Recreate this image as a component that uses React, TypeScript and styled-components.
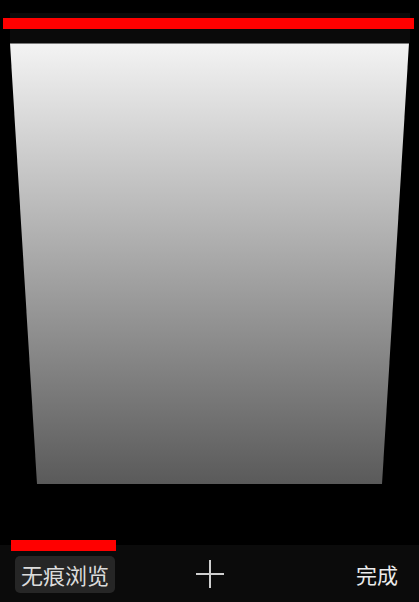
import React from "react";
import styled, { createGlobalStyle } from "styled-components";

const Global = createGlobalStyle`
  html, body {
    margin: 0;
    padding: 0;
    background: #000;
  }
  body {
    font-family: "Noto Sans CJK SC", "Noto Sans", sans-serif;
    -webkit-font-smoothing: antialiased;
  }
`;

const Screen = styled.div`
  width: 419px;
  height: 602px;
  background: #000;
  display: flex;
  flex-direction: column;
  overflow: hidden;
`;

const Stage = styled.div`
  flex: 1;
  display: flex;
  flex-direction: column;
  padding: 13px 9px 0 10px;
`;

const CardHeader = styled.div`
  height: 30px;
  background: #0a0a0a;
  padding-top: 5px;
  box-sizing: border-box;
`;

const RedBar = styled.div`
  height: 11px;
  background: #ff0000;
  margin: 0 -4px 0 -7px;
`;

const CardBody = styled.div`
  height: 441px;
  background: linear-gradient(to bottom, #7a7a7a 0px, #7a7a7a 1px, #f3f3f3 1px, #5a5a5a 100%);
  clip-path: polygon(0 0, 399px 0, 372px 100%, 27px 100%);
`;

const Toolbar = styled.div`
  position: relative;
  height: 57px;
  background: #0b0b0b;
  display: grid;
  grid-template-columns: 1fr auto 1fr;
  align-items: center;
  padding: 0 15px;
`;

const Indicator = styled.div`
  position: absolute;
  left: 11px;
  top: -5px;
  width: 105px;
  height: 11px;
  background: #ff0000;
`;

const PrivateButton = styled.button`
  justify-self: start;
  height: 37px;
  margin-top: 1px;
  padding: 0 6px;
  border: none;
  border-radius: 5px;
  background: #262626;
  color: #dcdcdc;
  font-family: "Noto Sans CJK SC", sans-serif;
  font-size: 22px;
  line-height: 37px;
  display: flex;
  align-items: center;
`;

const AddButton = styled.button`
  width: 30px;
  height: 30px;
  padding: 0;
  border: none;
  background: transparent;
  display: flex;
  align-items: center;
  justify-content: center;
`;

const DoneButton = styled.button`
  justify-self: end;
  margin-right: 6px;
  padding: 0;
  border: none;
  background: transparent;
  color: #ececec;
  font-family: "Noto Sans CJK SC", sans-serif;
  font-size: 21px;
  line-height: 28px;
`;

export default function App() {
  return (
    <>
      <Global />
      <Screen>
        <Stage>
          <CardHeader>
            <RedBar />
          </CardHeader>
          <CardBody />
        </Stage>
        <Toolbar>
          <Indicator />
          <PrivateButton>无痕浏览</PrivateButton>
          <AddButton aria-label="新建">
            <svg width="30" height="30" viewBox="0 0 30 30">
              <path d="M15 1 V29 M1 15 H29" stroke="#cfcfcf" strokeWidth="2" fill="none" />
            </svg>
          </AddButton>
          <DoneButton>完成</DoneButton>
        </Toolbar>
      </Screen>
    </>
  );
}
